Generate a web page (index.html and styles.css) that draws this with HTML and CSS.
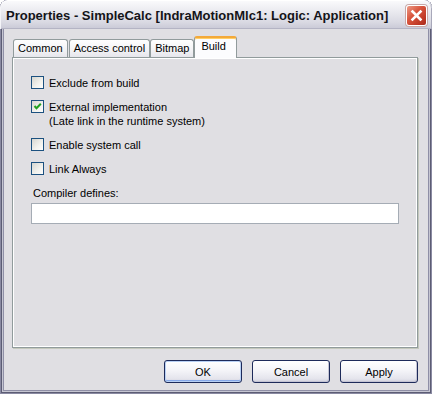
FILE: index.html
```html
<!DOCTYPE html>
<html lang="en">
<head>
    <meta charset="UTF-8">
    <title>Properties - SimpleCalc</title>
    <link rel="stylesheet" href="styles.css">
</head>
<body>
    <div class="window">
        <div class="titlebar">
            <span class="title">Properties - SimpleCalc [IndraMotionMlc1: Logic: Application]</span>
            <span class="close">
                <svg width="19" height="19" viewBox="0 0 19 19">
                    <path d="M5.5 5.5 L13.5 13.5 M13.5 5.5 L5.5 13.5" stroke="#fff" stroke-width="2.6" stroke-linecap="square"/>
                </svg>
            </span>
        </div>

        <div class="client">
            <div class="tabs">
                <div class="tab">Common</div>
                <div class="tab">Access control</div>
                <div class="tab">Bitmap</div>
                <div class="tab active">Build</div>
            </div>

            <div class="panel">
                <div class="check">
                    <span class="box"></span>
                    <span>Exclude from build</span>
                </div>
                <div class="check">
                    <span class="box">
                        <svg width="11" height="11" viewBox="0 0 11 11">
                            <path d="M2.5 5 L4.5 7.2 L8.8 2.8" fill="none" stroke="#21a121" stroke-width="2"/>
                        </svg>
                    </span>
                    <span>External implementation<br>(Late link in the runtime system)</span>
                </div>
                <div class="check">
                    <span class="box"></span>
                    <span>Enable system call</span>
                </div>
                <div class="check">
                    <span class="box"></span>
                    <span>Link Always</span>
                </div>
                <div class="field-label">Compiler defines:</div>
                <div class="textbox"></div>
            </div>

            <div class="buttons">
                <button class="btn default">OK</button>
                <button class="btn">Cancel</button>
                <button class="btn">Apply</button>
            </div>
        </div>
    </div>
</body>
</html>
```

FILE: styles.css
```css
body {
    margin: 0;
    padding: 0;
    background: #fff;
    font-family: "Liberation Sans", Arial, sans-serif;
    font-size: 11px;
    color: #000;
}
.window {
    width: 432px;
    height: 394px;
    box-sizing: border-box;
    display: flex;
    flex-direction: column;
    background: #e0dfe3;
    border-radius: 8px 8px 0 0;
    overflow: hidden;
    box-shadow:
        inset 1px 0 #8a8aa2, inset -1px 0 #8a8aa2, inset 0 -1px #8a8aa2,
        inset 2px 0 #5c5c74, inset -2px 0 #5c5c74, inset 0 -2px #5c5c74,
        inset 3px 0 #c6c6d2, inset -3px 0 #c6c6d2, inset 0 -3px #c6c6d2,
        inset 4px 0 #8f8fa6, inset -4px 0 #8f8fa6, inset 0 -4px #8f8fa6;
}
.titlebar {
    height: 29px;
    flex: none;
    display: flex;
    align-items: center;
    justify-content: space-between;
    padding: 0 5px 0 6px;
    box-sizing: border-box;
    border-radius: 8px 8px 0 0;
    background: linear-gradient(#fbfbfd 0%, #ececf1 35%, #dadae3 75%, #c9c9d6 100%);
    box-shadow: inset 0 1px #fff, inset 1px 0 #f4f4f8, inset -1px 0 #a8a8ba, inset 0 -1px #b4b4c4;
}
.title {
    font-size: 13px;
    font-weight: bold;
    color: #141418;
    margin-top: 1px;
}
.close {
    width: 21px;
    height: 21px;
    box-sizing: border-box;
    margin-top: 2px;
    border: 1px solid #fff;
    border-radius: 3px;
    background: linear-gradient(135deg, #ec9a86 0%, #d9573f 40%, #c13a27 75%, #a9291b 100%);
    box-shadow: 0 0 0 1px #c6a8a8;
}
.close svg {
    display: block;
}
.client {
    flex: 1;
    padding: 7px 14px 0 12px;
}
.tabs {
    display: flex;
    align-items: flex-end;
    height: 21px;
    padding-left: 1px;
    position: relative;
    z-index: 1;
}
.tab {
    height: 18px;
    box-sizing: border-box;
    padding: 0 4px;
    line-height: 17px;
    border: 1px solid #919b9c;
    border-bottom: none;
    border-radius: 3px 3px 0 0;
    background: linear-gradient(#fefefe, #f4f4f6 55%, #e6e6ec);
}
.tab:first-child {
    margin-right: 1px;
}
.tab.active {
    height: 22px;
    margin-bottom: -1px;
    line-height: 16px;
    padding: 0 10px 0 6px;
    border-top: 2px solid #f3a93a;
    background: #fcfcfe;
    box-shadow: inset 0 1px #ffcf66;
}
.panel {
    height: 291px;
    box-sizing: border-box;
    padding: 18px 18px 0 18px;
    border: 1px solid #919b9c;
    background: #e0dfe3;
    box-shadow: inset 1px 1px #fff, inset -1px -1px #fff, 1px 1px #c4c8bc;
}
.check {
    display: flex;
    gap: 5px;
    line-height: 14px;
    margin-bottom: 10px;
}
.box {
    flex: none;
    width: 13px;
    height: 13px;
    box-sizing: border-box;
    border: 1px solid #1c5180;
    background: linear-gradient(135deg, #d6d6d0 0%, #f2f2ee 60%, #fdfdfd 100%);
}
.box svg {
    display: block;
}
.field-label {
    line-height: 14px;
    padding-left: 2px;
    margin-bottom: 3px;
}
.textbox {
    height: 21px;
    box-sizing: border-box;
    border: 1px solid #a5acb5;
    background: #fff;
}
.buttons {
    display: flex;
    justify-content: flex-end;
    gap: 10px;
    margin-top: 12px;
}
.btn {
    width: 78px;
    height: 23px;
    padding: 0;
    font-family: "Liberation Sans", Arial, sans-serif;
    font-size: 11px;
    color: #000;
    border: 1px solid #1d2a5a;
    border-radius: 3px;
    background: linear-gradient(#ffffff 0%, #f4f4f8 45%, #e4e4ec 85%, #cfcfdc 100%);
    box-shadow: inset -1px -1px #c4c4d4;
}
.btn.default {
    box-shadow: inset 0 0 0 1px #b8d0f4, inset 0 -2px #86a8e8;
}
```
